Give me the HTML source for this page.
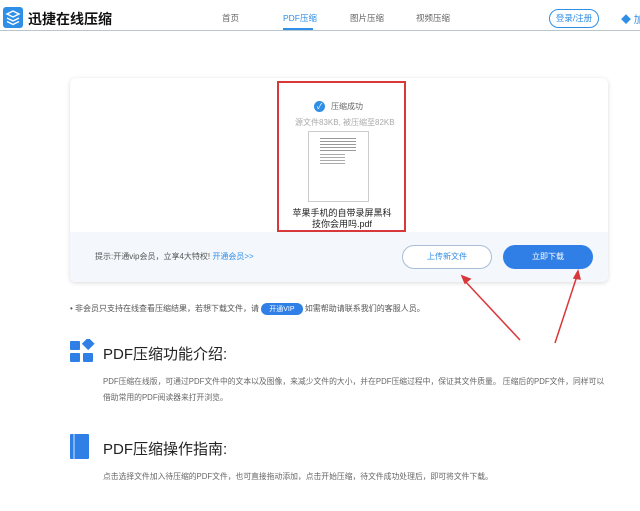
<!DOCTYPE html>
<html><head><meta charset="utf-8"><style>
*{margin:0;padding:0;box-sizing:border-box}
body{width:640px;height:511px;background:#fff;font-family:"Liberation Sans","Noto Sans CJK SC",sans-serif;position:relative;overflow:hidden;color:#333}
.a{position:absolute;white-space:nowrap}
</style></head><body>
<div class="a" style="left:0;top:0;width:640px;height:31px;background:#fff;border-bottom:1px solid #b9c6cc"></div>
<svg class="a" style="left:3px;top:7px" width="20" height="21" viewBox="0 0 20 21"><rect width="20" height="21" rx="3" fill="#2f8ee6"/><path d="M4 7l6-3 6 3-6 3z M4 11l6 3 6-3 M4 14.5l6 3 6-3" stroke="#fff" stroke-width="1.4" fill="none"/></svg>
<div class="a" style="left:28px;top:9px;font-size:14px;font-weight:bold;color:#111">迅捷在线压缩</div>
<div class="a" style="left:222px;top:12px;font-size:8.5px;color:#666">首页</div>
<div class="a" style="left:283px;top:12px;font-size:8.5px;color:#2f8ee6">PDF压缩</div>
<div class="a" style="left:283px;top:28px;width:30px;height:2px;background:#2f8ee6"></div>
<div class="a" style="left:350px;top:12px;font-size:8.5px;color:#666">图片压缩</div>
<div class="a" style="left:416px;top:12px;font-size:8.5px;color:#666">视频压缩</div>
<div class="a" style="left:549px;top:9px;width:50px;height:19px;border:1px solid #2f8ee6;border-radius:10px;font-size:8.5px;color:#2f8ee6;text-align:center;line-height:17px">登录/注册</div>
<div class="a" style="left:621px;top:11px;font-size:10px;color:#2f8ee6">◆ 加</div>
<div class="a" style="left:70px;top:78px;width:538px;height:204px;border-radius:6px;box-shadow:0 1px 5px rgba(0,0,0,.15);background:#fff;overflow:hidden">
<div class="a" style="left:0;top:154px;width:538px;height:50px;background:#f4f8fd"></div>
</div>
<div class="a" style="left:277px;top:81px;width:129px;height:151px;border:2px solid #d9383a;background:#fff"></div>
<div class="a" style="left:314px;top:101px;width:11px;height:11px;border-radius:50%;background:#2f8ee6;color:#fff;font-size:8px;line-height:11px;text-align:center">✓</div>
<div class="a" style="left:331px;top:101px;font-size:8px;color:#666">压缩成功</div>
<div class="a" style="left:295px;top:117px;font-size:8px;color:#aaa">源文件83KB, 被压缩至82KB</div>
<div class="a" style="left:308px;top:131px;width:61px;height:71px;border:1px solid #ccc;background:#fff"></div>
<div class="a" style="left:320px;top:138px;width:36px;height:14px;background:repeating-linear-gradient(#555 0 1px,transparent 1px 3px);opacity:.6"></div>
<div class="a" style="left:320px;top:154px;width:25px;height:10px;background:repeating-linear-gradient(#555 0 1px,transparent 1px 3px);opacity:.5"></div>
<div class="a" style="left:290px;top:208px;width:104px;text-align:center;font-size:9px;line-height:11px;color:#222;white-space:normal">苹果手机的自带录屏黑科技你会用吗.pdf</div>
<div class="a" style="left:95px;top:251px;font-size:8px;color:#555">提示:开通vip会员，立享4大特权! <span style="color:#2f8ee6">开通会员&gt;&gt;</span></div>
<div class="a" style="left:402px;top:245px;width:90px;height:24px;border:1px solid #a9bdd4;border-radius:12px;background:#fff;font-size:8px;color:#2f8ee6;text-align:center;line-height:22px">上传新文件</div>
<div class="a" style="left:503px;top:245px;width:90px;height:24px;border-radius:12px;background:#2f7fe6;font-size:8px;color:#fff;text-align:center;line-height:24px">立即下载</div>
<div class="a" style="left:70px;top:303px;font-size:8px;color:#555">• 非会员只支持在线查看压缩结果，若想下载文件，请 <span style="display:inline-block;background:#2f7fe6;color:#fff;border-radius:7px;padding:1px 8px;font-size:7px">开通VIP</span> 如需帮助请联系我们的客服人员。</div>
<svg class="a" style="left:0;top:0" width="640" height="511"><g stroke="#d9383a" stroke-width="1.5" fill="#d9383a"><line x1="520" y1="340" x2="464" y2="280"/><path d="M462 276l8 3-5 4z"/><line x1="555" y1="343" x2="577" y2="276"/><path d="M578 271l2 8-6-1z"/></g></svg>
<svg class="a" style="left:70px;top:339px" width="26" height="24"><rect x="0" y="2" width="10" height="9" rx="1" fill="#2f7fe6"/><rect x="13" y="0" width="9" height="9" transform="rotate(45 17.5 5.5)" fill="#2f7fe6"/><rect x="0" y="14" width="10" height="9" rx="1" fill="#2f7fe6"/><rect x="13" y="14" width="10" height="9" rx="1" fill="#2f7fe6"/></svg>
<div class="a" style="left:103px;top:343px;font-size:15px;color:#222">PDF压缩功能介绍:</div>
<div class="a" style="left:103px;top:376px;font-size:7.8px;color:#666">PDF压缩在线版，可通过PDF文件中的文本以及图像，来减少文件的大小，并在PDF压缩过程中，保证其文件质量。 压缩后的PDF文件，同样可以</div>
<div class="a" style="left:103px;top:392px;font-size:7.8px;color:#666">借助常用的PDF阅读器来打开浏览。</div>
<svg class="a" style="left:70px;top:434px" width="22" height="25"><rect x="0" y="0" width="19" height="25" rx="1" fill="#2f7fe6"/><rect x="3" y="0" width="2" height="25" fill="#7fb3f3"/></svg>
<div class="a" style="left:103px;top:438px;font-size:15px;color:#222">PDF压缩操作指南:</div>
<div class="a" style="left:103px;top:471px;font-size:7.8px;color:#666">点击选择文件加入待压缩的PDF文件，也可直接拖动添加，点击开始压缩，待文件成功处理后，即可将文件下载。</div>
</body></html>
